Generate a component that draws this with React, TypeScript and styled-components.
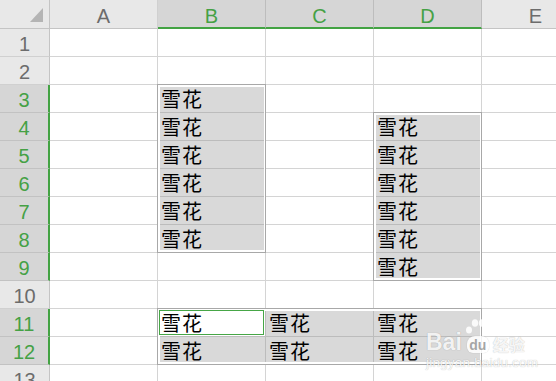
import React from "react";
import styled, { createGlobalStyle, css } from "styled-components";

const GlobalStyle = createGlobalStyle`
  html, body {
    margin: 0;
    padding: 0;
    background: #fff;
    overflow: hidden;
  }
`;

const COLS = ["A", "B", "C", "D", "E"];
const ROW_COUNT = 13;
const COL_X = [0, 50, 158, 266, 374, 482, 590];
const rowTop = (r: number) => (r === 0 ? 0 : 29 + 28 * (r - 1));

type Range = { c1: number; r1: number; c2: number; r2: number };

// columns are 1-based (A = 1), rows 1-based
const RANGES: Range[] = [
  { c1: 2, r1: 3, c2: 2, r2: 8 },
  { c1: 4, r1: 4, c2: 4, r2: 9 },
  { c1: 2, r1: 11, c2: 4, r2: 12 },
];
const ACTIVE = { c: 2, r: 11 };

const inRange = (c: number, r: number) =>
  RANGES.some((g) => c >= g.c1 && c <= g.c2 && r >= g.r1 && r <= g.r2);

const colSelected = (c: number) => c >= 2 && c <= 4;
const rowSelected = (r: number) => (r >= 3 && r <= 9) || r === 11 || r === 12;

const cellValue = (c: number, r: number) => (inRange(c, r) ? "雪花" : "");

const Page = styled.div`
  position: relative;
  width: 556px;
  height: 381px;
  overflow: hidden;
`;

const Sheet = styled.div`
  position: relative;
  display: grid;
  grid-template-columns: 50px repeat(5, 108px);
  grid-template-rows: 29px repeat(${ROW_COUNT}, 28px);
  width: 590px;
`;

const Corner = styled.div`
  display: flex;
  align-items: flex-start;
  justify-content: flex-end;
  box-sizing: border-box;
  padding: 8px 6px 0 0;
  background: #e8e8e8;
  border-right: 1px solid #c4c4c4;
  border-bottom: 1px solid #c4c4c4;
`;

const ColHead = styled.div<{ $on: boolean }>`
  box-sizing: border-box;
  background: ${(p) => (p.$on ? "#d6d6d6" : "#e8e8e8")};
  border-right: 1px solid ${(p) => (p.$on ? "#bdbdbd" : "#d0d0d0")};
  border-bottom: ${(p) => (p.$on ? "2px solid #43a343" : "1px solid #c4c4c4")};
  color: ${(p) => (p.$on ? "#45a145" : "#6c6c6c")};
  font-family: "Liberation Sans", Arial, sans-serif;
  font-size: 20px;
  line-height: 23px;
  padding-top: 5px;
  text-align: center;
`;

const RowHead = styled.div<{ $on: boolean }>`
  box-sizing: border-box;
  background: ${(p) => (p.$on ? "#d6d6d6" : "#e8e8e8")};
  border-bottom: 1px solid ${(p) => (p.$on ? "#c2c2c2" : "#d0d0d0")};
  border-right: ${(p) => (p.$on ? "2px solid #43a343" : "1px solid #c4c4c4")};
  color: ${(p) => (p.$on ? "#45a145" : "#6c6c6c")};
  font-family: "Liberation Sans", Arial, sans-serif;
  font-size: 20px;
  line-height: 23px;
  padding-top: 4px;
  text-align: center;
`;

const Cell = styled.div<{ $sel: boolean; $active: boolean }>`
  box-sizing: border-box;
  border-right: 1px solid #d4d4d4;
  border-bottom: 1px solid #d4d4d4;
  background: #fff;
  color: #000;
  font-family: "Noto Sans CJK SC", "Noto Sans", sans-serif;
  font-size: 20px;
  line-height: 26px;
  letter-spacing: 1px;
  padding: 1px 0 0 3px;
  white-space: nowrap;
  overflow: hidden;
  ${(p) =>
    p.$sel &&
    css`
      background: ${p.$active ? "#fff" : "#d9d9d9"};
      border-right-color: #bcbcbc;
      border-bottom-color: #bcbcbc;
    `}
`;

const SelectionFrame = styled.div`
  position: absolute;
  box-sizing: border-box;
  border: 1px solid #a8a8a8;
  box-shadow: inset 2px 2px 0 0 #fff, inset -1px -2px 0 0 #fff;
  pointer-events: none;
`;

const ActiveFrame = styled.div`
  position: absolute;
  box-sizing: border-box;
  border: 1px solid #46a646;
  pointer-events: none;
`;

const Watermark = styled.div`
  position: absolute;
  left: 426px;
  top: 318px;
  display: flex;
  flex-direction: column;
  color: rgba(255, 255, 255, 0.9);
  text-shadow: 0 0 1px rgba(0, 0, 0, 0.3);
  pointer-events: none;
`;

const MarkRow = styled.div`
  display: flex;
  align-items: flex-end;
  height: 36px;
`;

const Bai = styled.span`
  font-family: "Liberation Sans", Arial, sans-serif;
  font-weight: bold;
  font-size: 23px;
  line-height: 23px;
`;

const Paw = styled.span`
  display: flex;
  flex-direction: column;
  align-items: center;
  width: 26px;
  height: 36px;
  margin: 0 2px 0 3px;
`;

const Palm = styled.span`
  width: 22px;
  height: 17px;
  margin-top: -2px;
  border-radius: 8px 8px 6px 6px;
  background: rgba(255, 255, 255, 0.85);
  box-shadow: 0 0 1px rgba(0, 0, 0, 0.25);
  color: rgba(160, 160, 160, 0.95);
  text-shadow: none;
  font-family: "Liberation Sans", Arial, sans-serif;
  font-weight: bold;
  font-size: 14px;
  line-height: 18px;
  text-align: center;
`;

const Jingyan = styled.span`
  font-family: "Noto Sans CJK SC", sans-serif;
  font-weight: bold;
  font-size: 16px;
  line-height: 20px;
`;

const Domain = styled.span`
  font-family: "Liberation Sans", Arial, sans-serif;
  font-size: 13.5px;
  line-height: 15px;
  margin-top: 1px;
  letter-spacing: 0.2px;
`;

export default function App() {
  const body: React.ReactNode[] = [];

  body.push(
    <Corner key="corner">
      <svg width="13" height="14" viewBox="0 0 13 14">
        <polygon points="13,0 13,14 0,14" fill="#b4b4b4" />
      </svg>
    </Corner>
  );
  COLS.forEach((name, i) => {
    body.push(
      <ColHead key={`h${name}`} $on={colSelected(i + 1)}>
        {name}
      </ColHead>
    );
  });

  for (let r = 1; r <= ROW_COUNT; r++) {
    body.push(
      <RowHead key={`r${r}`} $on={rowSelected(r)}>
        {r}
      </RowHead>
    );
    COLS.forEach((name, i) => {
      const c = i + 1;
      body.push(
        <Cell
          key={`${name}${r}`}
          $sel={inRange(c, r)}
          $active={c === ACTIVE.c && r === ACTIVE.r}
        >
          {cellValue(c, r)}
        </Cell>
      );
    });
  }

  return (
    <Page>
      <GlobalStyle />
      <Sheet>
        {body}
        {RANGES.map((g, i) => (
          <SelectionFrame
            key={i}
            style={{
              left: COL_X[g.c1] - 1,
              top: rowTop(g.r1) - 1,
              width: COL_X[g.c2 + 1] - COL_X[g.c1] + 1,
              height: rowTop(g.r2 + 1) - rowTop(g.r1) + 1,
            }}
          />
        ))}
        <ActiveFrame
          style={{
            left: COL_X[ACTIVE.c] + 1,
            top: rowTop(ACTIVE.r) + 1,
            width: COL_X[ACTIVE.c + 1] - COL_X[ACTIVE.c] - 3,
            height: 25,
          }}
        />
      </Sheet>
      <Watermark>
        <MarkRow>
          <Bai>Bai</Bai>
          <Paw>
            <svg width="26" height="20" viewBox="0 0 26 20">
              <ellipse cx="4" cy="12" rx="3" ry="3.6" fill="rgba(255,255,255,0.85)" />
              <ellipse cx="10" cy="5" rx="3.2" ry="3.8" fill="rgba(255,255,255,0.85)" />
              <ellipse cx="17" cy="5" rx="3.2" ry="3.8" fill="rgba(255,255,255,0.85)" />
              <ellipse cx="22.5" cy="12" rx="3" ry="3.6" fill="rgba(255,255,255,0.85)" />
            </svg>
            <Palm>du</Palm>
          </Paw>
          <Jingyan>经验</Jingyan>
        </MarkRow>
        <Domain>jingyan.baidu.com</Domain>
      </Watermark>
    </Page>
  );
}
